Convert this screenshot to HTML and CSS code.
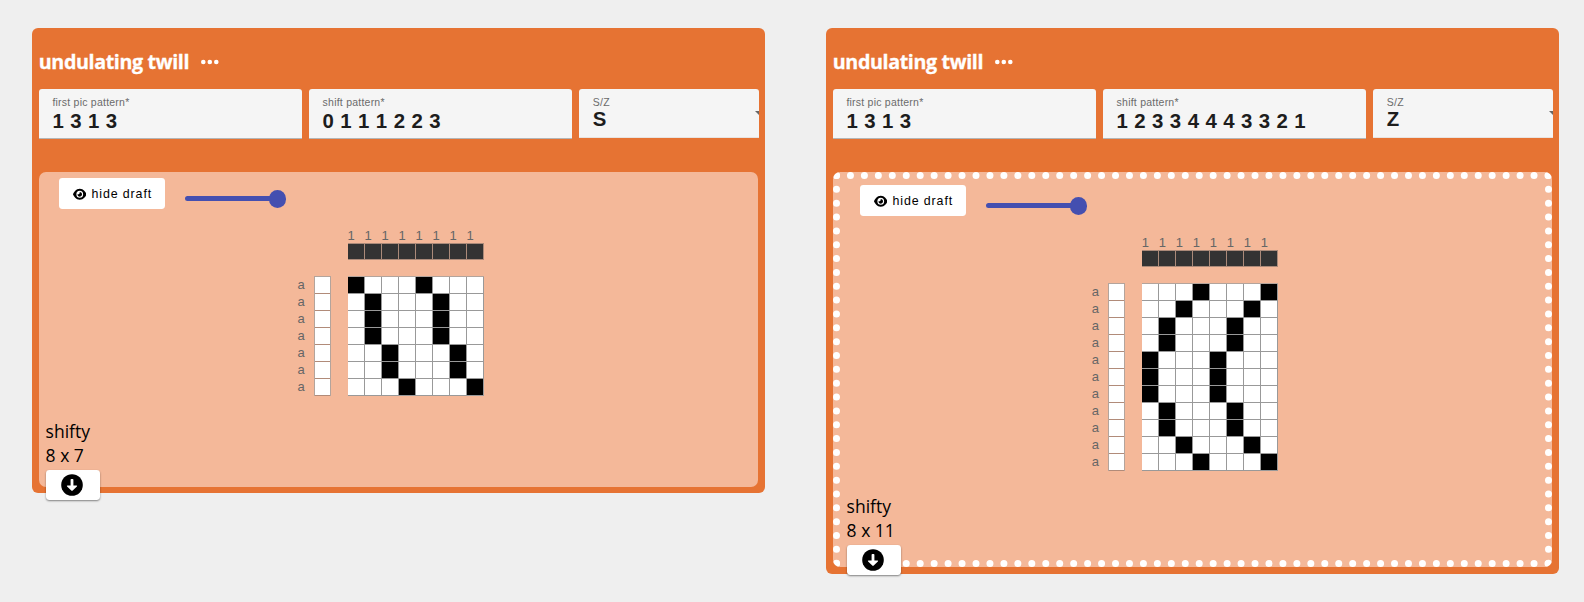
FILE: index.html
```
<!DOCTYPE html>
<html lang="en">
<head>
<meta charset="utf-8">
<title>undulating twill</title>
<link rel="stylesheet" href="styles.css">
</head>
<body>
<svg class="defs" aria-hidden="true">
  <symbol id="dots" viewBox="0 0 18 6"><circle cx="2.3" cy="3" r="2.3"/><circle cx="8.8" cy="3" r="2.3"/><circle cx="15.3" cy="3" r="2.3"/></symbol>
  <symbol id="eye" viewBox="0 0 576 512" preserveAspectRatio="none"><path d="M288 32c-80.8 0-145.500 36.800-192.600 80.600C48.600 156 17.300 208 2.500 243.700c-3.300 7.900-3.300 16.700 0 24.600C17.300 304 48.600 356 95.400 399.400C142.500 443.200 207.200 480 288 480s145.500-36.800 192.600-80.600c46.800-43.500 78.100-95.400 93-131.100c3.300-7.900 3.300-16.700 0-24.600c-14.900-35.700-46.200-87.700-93-131.100C433.500 68.800 368.800 32 288 32zM144 256a144 144 0 1 1 288 0a144 144 0 1 1-288 0zm144-64c0 35.300-28.700 64-64 64c-7.100 0-13.900-1.200-20.300-3.300c-5.500-1.800-11.900 1.600-11.700 7.400c.3 6.900 1.300 13.800 3.200 20.700c13.700 51.200 66.400 81.600 117.600 67.900s81.600-66.400 67.900-117.600c-11.100-41.500-47.800-69.400-88.600-71.100c-5.800-.2-9.200 6.100-7.400 11.700c2.100 6.400 3.300 13.200 3.300 20.300z"/></symbol>
  <symbol id="down" viewBox="0 0 22 22"><circle cx="11" cy="11" r="10.800"/><path class="arrow" d="M9.600 5.800q0-.8.8-.8h1.200q.8 0 .8.800v5.700h3.100q1.100 0 .4.900l-4.200 4.200q-.7.700-1.400 0l-4.200-4.200q-.7-.9.400-.9h3.100z"/></symbol>
</svg>
<main class="board">
  <section class="card">
    <header class="title"><h2>undulating twill</h2><svg class="more"><use href="#dots"/></svg></header>
    <div class="fields">
      <label class="field"><span class="label">first pic pattern*</span><span class="value">1 3 1 3</span></label>
      <label class="field"><span class="label">shift pattern*</span><span class="value">0 1 1 1 2 2 3</span></label>
      <label class="field select"><span class="label">S/Z</span><span class="value">S</span><i class="caret"></i></label>
    </div>
    <div class="panel short">
      <div class="controls"><button class="toggle"><svg class="eye"><use href="#eye"/></svg>hide draft</button><div class="slider"><i class="thumb"></i></div></div>
      <div class="draft" data-rows="04 15 15 15 26 26 37"></div>
      <div class="info"><p>shifty</p><p>8 x 7</p><button class="download"><svg><use href="#down"/></svg></button></div>
    </div>
  </section>
  <section class="card">
    <header class="title"><h2>undulating twill</h2><svg class="more"><use href="#dots"/></svg></header>
    <div class="fields">
      <label class="field"><span class="label">first pic pattern*</span><span class="value">1 3 1 3</span></label>
      <label class="field"><span class="label">shift pattern*</span><span class="value">1 2 3 3 4 4 4 3 3 2 1</span></label>
      <label class="field select"><span class="label">S/Z</span><span class="value">Z</span><i class="caret"></i></label>
    </div>
    <div class="panel selected">
      <div class="controls"><button class="toggle"><svg class="eye"><use href="#eye"/></svg>hide draft</button><div class="slider"><i class="thumb"></i></div></div>
      <div class="draft" data-rows="37 26 15 15 04 04 04 15 15 26 37"></div>
      <div class="info"><p>shifty</p><p>8 x 11</p><button class="download"><svg><use href="#down"/></svg></button></div>
    </div>
  </section>
</main>
<script src="draft.js"></script>
</body>
</html>
```
FILE: styles.css
```
* { box-sizing: border-box; }
body { margin: 0; min-height: 602px; background: #efefef; font-family: "Open Sans", sans-serif; color: #000; }
h2, p { margin: 0; }
.defs { display: none; }
.board { display: flex; align-items: flex-start; gap: 61px; min-height: 602px; padding: 28px 0 0 32px; }
.card { width: 733.200px; margin-right: -.200px; padding: 0 6.800px 6.800px; border-radius: 6px; background: #e67333; }
.title { display: flex; align-items: center; gap: 12px; height: 61px; padding-top: 6px; color: #fff; }
.title h2 { font-size: 19.700px; line-height: 26px; font-weight: 700; letter-spacing: -.380px; -webkit-text-stroke: .300px #fff; }
.more { width: 18px; height: 6px; fill: #fff; }
.fields { display: grid; grid-template-columns: 263.200px 263.200px 179.400px; gap: 7px; height: 82.500px; align-items: start; }
.field { position: relative; display: flex; flex-direction: column; height: 49.500px; padding: 7px 13.600px 0; overflow: hidden; border-radius: 3px 3px 0 0; border-bottom: 1px solid #b5b5b5; background: #f5f5f5; font-family: "Liberation Sans", Arial, sans-serif; }
.label { font-size: 10.500px; line-height: 12px; letter-spacing: .230px; color: #6b6b6b; }
.value { margin-top: 1px; font-size: 20.400px; font-weight: 700; line-height: 24px; letter-spacing: .380px; color: #1d1d1d; }
.select { height: 49px; border-bottom-color: #e8e3e0; }
.select .value { margin-top: -1px; }
.caret { position: absolute; right: -4px; top: 22px; border: 4.500px solid transparent; border-top-color: #686868; border-bottom: 0; }
.panel { height: 395.700px; border-radius: 7px; background: #f4b899; }
.short { height: 315px; }
.selected { border: 7px dotted #fff; }
.controls { display: flex; height: 37.500px; padding: 6.800px 0 0 20.200px; gap: 20.500px; }
.toggle { display: flex; align-items: center; gap: 5.500px; width: 106px; height: 30.500px; padding: 1px 0 0 13.600px; border: 0; border-radius: 3.400px; background: #fff; color: #000; font: 12.400px "Liberation Sans", Arial, sans-serif; letter-spacing: .880px; white-space: nowrap; }
.eye { width: 13.500px; height: 12.600px; flex: none; }
.slider { display: flex; align-items: center; justify-content: flex-end; width: 100.500px; height: 5px; margin-top: 18px; border-radius: 3px; background: linear-gradient(#444fb0, #444fb0) 0 0 / 92px 5px no-repeat; }
.thumb { width: 17.400px; height: 17.400px; border-radius: 50%; background: #444fb0; flex: none; }
.draft { display: grid; grid-template-columns: 7px 17px 136px; column-gap: 10px; width: 240px; margin: 18.700px 0 0 258.800px; font: 13px/17px "Liberation Sans", Arial, sans-serif; color: #666; }
.selected .draft { margin-left: 252px; }
.warp { grid-column: 3; margin-left: 6px; }
.counts, .shafts { display: grid; grid-template-columns: repeat(8, 17px); }
.counts { height: 15.400px; line-height: 15px; }
.shafts { height: 33.300px; }
.shafts i { height: 17px; background: #333; border: solid #ab8a79; border-width: 1px 1px 1px 0; }
.letters { display: grid; grid-auto-rows: 17px; align-content: start; line-height: 17px; }
.weft { width: 17px; margin-left: -.800px; border: 1px solid #b3a49c; border-bottom: 0; }
.weft i { display: block; height: 17px; background: #fff; border-bottom: 1px solid #b18b79; }
.weave { display: grid; grid-template-columns: repeat(8, 17px); grid-auto-rows: 17px; margin-left: 6px; width: 136px; border-top: 1px solid #b3a49c; }
.weave i { background: #fff; border: solid #999; border-width: 0 1px 1px 0; }
.weave .on { background: #000; }
.info { padding-left: 6.800px; font-size: 17.500px; line-height: 23.800px; margin-top: 23.700px; }
.download { display: flex; align-items: center; justify-content: center; width: 54.400px; height: 30.600px; margin-top: 2.200px; padding: 0 2px 0 0; border: 0; border-radius: 3.400px; background: #fff; box-shadow: 0 1px 2px #0007; }
.download svg { width: 22px; height: 22px; }
.arrow { fill: #fff; }
```
FILE: draft.js
```
const repeat = (n, html) => html.repeat(n);
for (const draft of document.querySelectorAll(".draft")) {
  const rows = draft.dataset.rows.split(" ");
  const cells = rows.map(row => Array.from({ length: 8 }, (_, x) =>
    `<i class="${row.includes(x) ? "on" : "off"}"></i>`).join("")).join("");
  draft.innerHTML = `
    <div class="warp"><div class="counts">${repeat(8, "<span>1</span>")}</div>
    <div class="shafts">${repeat(8, "<i></i>")}</div></div>
    <div class="letters">${repeat(rows.length, "<span>a</span>")}</div>
    <div class="weft">${repeat(rows.length, "<i></i>")}</div>
    <div class="weave">${cells}</div>`;
}
```
